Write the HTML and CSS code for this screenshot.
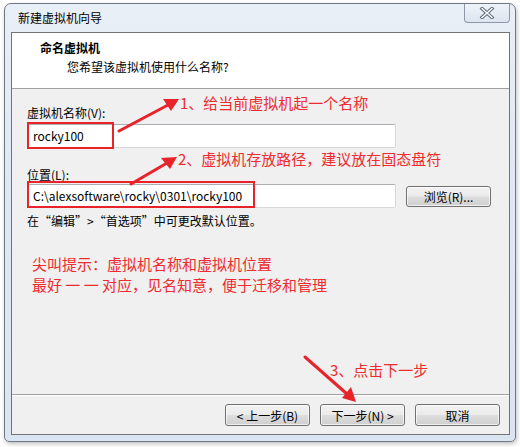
FILE: index.html
```html
<!DOCTYPE html>
<html lang="zh-CN">
<head>
    <meta charset="UTF-8">
    <meta name="viewport" content="width=device-width, initial-scale=1.0">
    <link rel="stylesheet" href="styles.css">
    <title>新建虚拟机向导</title>
</head>
<body>
    <div class="window">

        <div class="titlebar">
            <span class="caption">新建虚拟机向导</span>
            <span class="close">
                <svg width="16" height="12" viewBox="0 0 16 12">
                    <path d="M3 1.5 L13 10.5 M13 1.5 L3 10.5" stroke="#5f6b7a" stroke-width="3.4" stroke-linecap="square"/>
                    <path d="M3 1.5 L13 10.5 M13 1.5 L3 10.5" stroke="#ffffff" stroke-width="1.4" stroke-linecap="square"/>
                </svg>
            </span>
        </div>

        <div class="client">
            <div class="header">
                <div class="head-title">命名虚拟机</div>
                <div class="head-sub">您希望该虚拟机使用什么名称?</div>
            </div>

            <div class="content">
                <div class="label">虚拟机名称(V):</div>
                <div class="field">rocky100</div>

                <div class="label label-loc">位置(L):</div>
                <div class="row">
                    <div class="field">C:\alexsoftware\rocky\0301\rocky100</div>
                    <button class="btn browse">浏览(R)...</button>
                </div>

                <p class="hint">在“编辑”>“首选项”中可更改默认位置。</p>

                <p class="note">尖叫提示：虚拟机名称和虚拟机位置<br>最好 一 一 对应，见名知意，便于迁移和管理</p>
            </div>

            <div class="footer">
                <button class="btn">&lt; 上一步(B)</button>
                <button class="btn">下一步(N) &gt;</button>
                <button class="btn">取消</button>
            </div>
        </div>
    </div>

    <!-- annotations drawn over the dialog -->
    <div class="marks">
        <svg class="marks-svg" width="520" height="447" viewBox="0 0 520 447">
            <rect x="28" y="123" width="85" height="25" fill="none" stroke="#e8232a" stroke-width="2"/>
            <rect x="28" y="182" width="226" height="25" fill="none" stroke="#e8232a" stroke-width="2"/>
            <g stroke="#e8232a" stroke-width="3" stroke-linecap="round" fill="#e8232a">
                <line x1="119" y1="131" x2="168" y2="105"/>
                <line x1="131" y1="184" x2="167" y2="163"/>
                <line x1="305" y1="357" x2="347" y2="394"/>
            </g>
            <g fill="#e8232a">
                <polygon points="179,99 163,99 171,111"/>
                <polygon points="177,157 161,158 170,169"/>
                <polygon points="356,402 351,387 342,398"/>
            </g>
        </svg>
        <span class="mark mark-1">1、给当前虚拟机起一个名称</span>
        <span class="mark mark-2">2、虚拟机存放路径，建议放在固态盘符</span>
        <span class="mark mark-3">3、点击下一步</span>
    </div>
</body>
</html>
```

FILE: styles.css
```css
*{
    margin: 0;
    padding: 0;
    box-sizing: border-box;
    font-family: "Noto Sans CJK SC", "Liberation Sans", sans-serif;
}

body{
    background: #ffffff;
    width: 520px;
    height: 447px;
    position: relative;
    overflow: hidden;
}

.window{
    margin: 3px 0 0 4px;
    width: 512px;
    height: 439px;
    border: 1px solid #6f7986;
    border-radius: 7px 7px 5px 5px;
    background: linear-gradient(180deg, #e9eff7 0%, #dfe8f4 40%, #dbe5f2 100%);
    padding: 0 5px 6px 6px;
    display: flex;
    flex-direction: column;
    box-shadow: 1px 2px 4px rgba(0, 0, 0, 0.25);
}

.titlebar{
    height: 28px;
    display: flex;
    justify-content: space-between;
    align-items: flex-start;
}

.caption{
    font-size: 12px;
    line-height: 16px;
    padding: 6px 0 0 7px;
    color: #000;
}

.close{
    width: 46px;
    height: 19px;
    margin-right: 0;
    border: 1px solid #8d97a5;
    border-top: none;
    border-radius: 0 0 4px 4px;
    background: linear-gradient(180deg, #eef3f9, #dce5f0);
    display: flex;
    justify-content: center;
    align-items: center;
}

.client{
    height: 403px;
    border: 1px solid #737373;
    background: #f0f0f0;
    display: flex;
    flex-direction: column;
}

.header{
    height: 56px;
    background: #ffffff;
    border-bottom: 1px solid #a0a0a0;
    padding: 6px 0 0 28px;
}

.head-title{
    font-size: 12px;
    line-height: 18px;
    font-weight: bold;
    color: #000;
}

.head-sub{
    font-size: 12px;
    line-height: 18px;
    margin-top: 1px;
    padding-left: 27px;
    color: #000;
}

.content{
    flex: 1;
    padding: 16px 0 0 15px;
}

.label{
    font-size: 12px;
    line-height: 16px;
    color: #000;
}

.label-loc{
    margin-top: 19px;
}

.field{
    width: 369px;
    height: 24px;
    margin-top: 3px;
    background: #ffffff;
    border: 1px solid #d5d7db;
    border-top-color: #abadb3;
    border-radius: 2px;
    font-size: 12px;
    line-height: 22px;
    padding-left: 5px;
    color: #000;
}

.row{
    display: flex;
    align-items: flex-start;
    gap: 10px;
    margin-top: 0;
}

.row .field{
    margin-top: 1px;
}

.btn{
    width: 85px;
    height: 22px;
    border: 1px solid #707070;
    border-radius: 3px;
    background: linear-gradient(180deg, #f2f2f2 0%, #ebebeb 48%, #dddddd 52%, #cfcfcf 100%);
    font-size: 12px;
    color: #000;
    box-shadow: inset 0 0 0 1px rgba(255, 255, 255, 0.7);
}

.browse{
    margin-top: 3px;
    height: 21px;
}

.hint{
    font-size: 12px;
    line-height: 16px;
    margin-top: 5px;
    color: #000;
}

.note{
    font-size: 15px;
    line-height: 21px;
    margin-top: 24px;
    padding-left: 5px;
    color: #ee2b2f;
}

.footer{
    height: 40px;
    border-top: 1px solid #a0a0a0;
    box-shadow: inset 0 1px 0 #ffffff;
    display: flex;
    justify-content: flex-end;
    gap: 10px;
    padding: 9px 9px 0 0;
}

.marks{
    position: absolute;
    left: 0;
    top: 0;
    width: 520px;
    height: 447px;
    pointer-events: none;
}

.marks-svg{
    position: absolute;
    left: 0;
    top: 0;
}

.mark{
    position: absolute;
    font-size: 15px;
    line-height: 20px;
    color: #ee2b2f;
    white-space: nowrap;
}

.mark-1{
    left: 180px;
    top: 93px;
}

.mark-2{
    left: 178px;
    top: 149px;
}

.mark-3{
    left: 330px;
    top: 360px;
}
```
